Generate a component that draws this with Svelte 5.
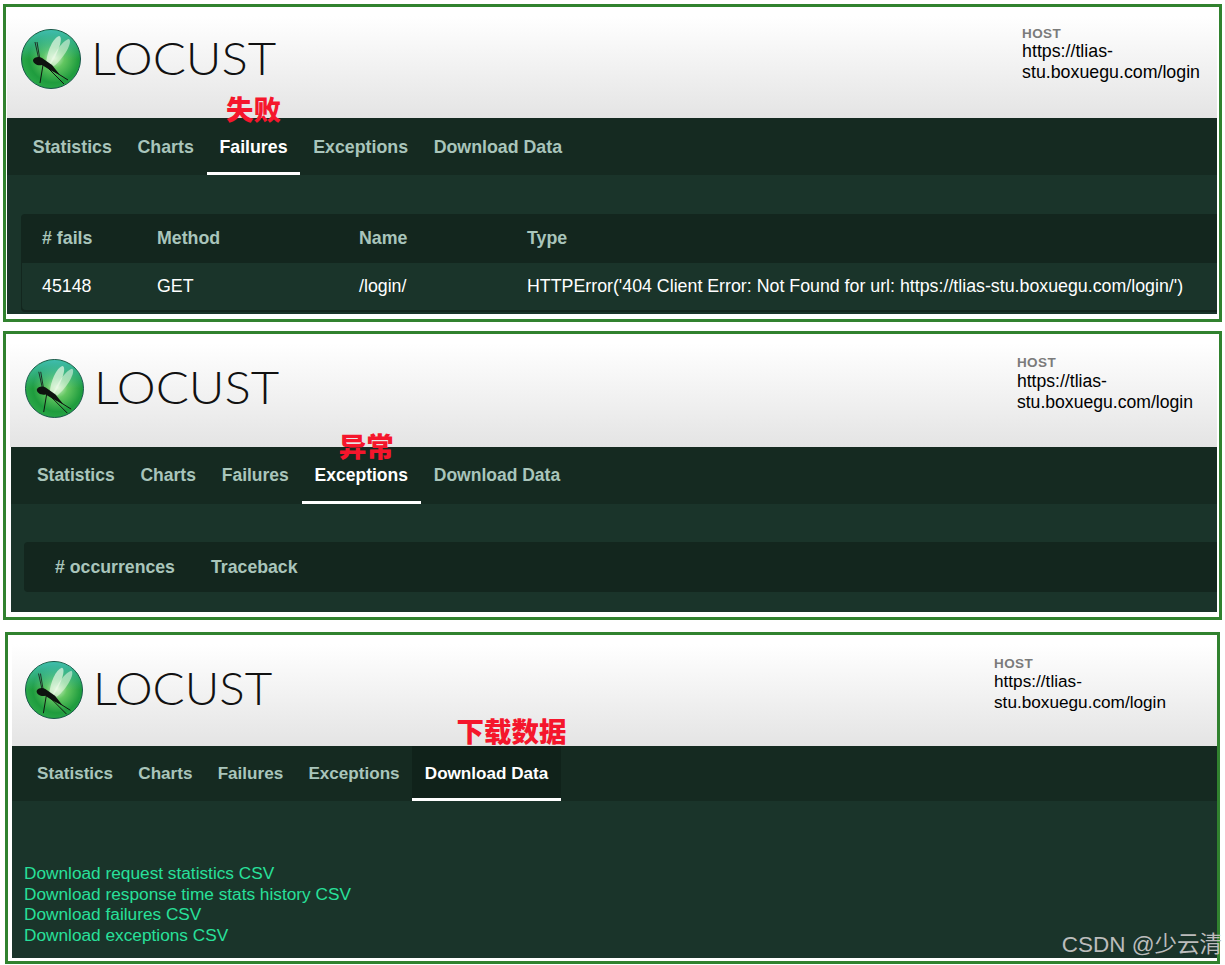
<script>
  const tabs = ['Statistics', 'Charts', 'Failures', 'Exceptions', 'Download Data'];
  const links = ['Download request statistics CSV', 'Download response time stats history CSV', 'Download failures CSV', 'Download exceptions CSV'];
  const panels = [
    { id: 'p1', active: 2, note: '失败' },
    { id: 'p2', active: 3, note: '异常' },
    { id: 'p3', active: 4, note: '下载数据' }
  ];
</script>

{#snippet logo(id)}
  <svg class="mark" viewBox="0 0 60 60" aria-hidden="true">
    <defs>
      <radialGradient id="ball{id}" cx="0.55" cy="0.48" r="0.6">
        <stop offset="0" stop-color="#d8f6d2" />
        <stop offset="0.3" stop-color="#62c660" />
        <stop offset="0.7" stop-color="#1f9c3e" />
        <stop offset="0.92" stop-color="#2aa848" />
        <stop offset="1" stop-color="#0f7040" />
      </radialGradient>
      <linearGradient id="rim{id}" x1="0" y1="0" x2="0" y2="1">
        <stop offset="0" stop-color="#3fbcae" />
        <stop offset="0.5" stop-color="#3fbcae" stop-opacity="0" />
      </linearGradient>
    </defs>
    <circle cx="30" cy="30" r="29.5" fill="url(#ball{id})" stroke="#17564a" stroke-width="1" />
    <circle cx="30" cy="30" r="29" fill="url(#rim{id})" />
    <path d="M25 35C26 22 32 9 38 7C43 8 37 24 30 35Z" fill="#e8f8e4" opacity=".7" />
    <path d="M28 36C33 24 42 11 48 10C52 13 43 29 33 37Z" fill="#eefaea" opacity=".55" />
    <path d="M18 31L14 13M19 31L16 13" stroke="#1c2f26" stroke-width="1" fill="none" />
    <path d="M12 31C13 28 18 27 21 29L31 36L39 46L29 41L21 36C17 37 12 35 12 31Z" fill="#0e130f" />
    <path d="M22 36L19 54M26 38L43 55M31 41L47 51" stroke="#0e130f" stroke-width="1" fill="none" />
  </svg>
{/snippet}

<main class="page">
  {#each panels as p}
    <section class="panel {p.id}">
      <header class="head">
        <div class="brand">
          {@render logo(p.id)}
          <span class="word">LOCUST</span>
        </div>
        <div class="host">
          <div class="host-label">HOST</div>
          <div class="host-url">https://tlias-<br />stu.boxuegu.com/login</div>
        </div>
      </header>
      <nav class="nav">
        {#each tabs as t, i}
          <span class="tab" class:active={i === p.active}>
            {t}
            {#if i === p.active}<b class="note">{p.note}</b>{/if}
          </span>
        {/each}
      </nav>
      <div class="body">
        {#if p.id === 'p1'}
          <div class="table">
            <div class="row th"><span class="c1">#&nbsp;fails</span><span class="c2">Method</span><span class="c3">Name</span><span class="c4">Type</span></div>
            <div class="row td"><span class="c1">45148</span><span class="c2">GET</span><span class="c3">/login/</span><span class="c4">HTTPError('404 Client Error: Not Found for url: https://tlias-stu.boxuegu.com/login/')</span></div>
          </div>
        {:else if p.id === 'p2'}
          <div class="table">
            <div class="row th"><span class="e1"># occurrences</span><span>Traceback</span></div>
          </div>
        {:else}
          <div class="links">
            {#each links as l}<span class="link">{l}</span>{/each}
          </div>
        {/if}
      </div>
    </section>
  {/each}
  <span class="wm">CSDN @少云清</span>
</main>

<style>
  :global(body) { margin: 0; background: #fff; }
  .page {
    width: 1225px; height: 965px; overflow: hidden; position: relative; box-sizing: border-box;
    padding: 4px 3px 0;
    font-family: "Liberation Sans", Arial, sans-serif;
  }
  .panel { border: 3px solid #31822f; box-sizing: border-box; background: #fff; display: flex; flex-direction: column; }
  .head {
    display: flex; justify-content: space-between; box-sizing: border-box; flex: none;
    background: linear-gradient(#fff 8%, #e4e4e4);
  }
  .brand { display: flex; align-items: center; }
  .word { font-family: Lato, sans-serif; font-weight: 300; color: #111; line-height: 1; transform: scaleX(1.068); transform-origin: left center; margin-top: -2px; }
  .host-label { font-weight: 700; font-size: 13.5px; color: #7b7b7b; letter-spacing: .4px; line-height: 14px; }
  .host-url { color: #000; line-height: 21px; }
  .nav { display: flex; background: #152a21; flex: none; }
  .tab { position: relative; font-weight: 700; color: #a9c5bb; box-sizing: border-box; display: flex; align-items: center; white-space: nowrap; }
  .tab.active { color: #fff; box-shadow: inset 0 -3px #fff; }
  .note {
    position: absolute; left: 0; right: 0; text-align: center; line-height: 28px;
    color: #f5162c; font-family: "Noto Sans CJK SC", sans-serif; font-weight: 900; font-size: 27.5px; white-space: nowrap;
  }
  .body { background: #1a342a; flex: 1; min-height: 0; box-sizing: border-box; }
  .table { background: #13261e; border-radius: 4px 0 0 4px; overflow: hidden; }
  .row { display: flex; align-items: center; font-size: 17.8px; }
  .th { color: #a9c5bb; font-weight: 700; }
  .td { color: #fff; background: #1a342a; margin: 0 0 2px 1.5px; border-radius: 0 0 0 4px; box-sizing: border-box; padding-bottom: 1px; }
  .c1, .c2, .c3 { flex: none; box-sizing: border-box; }
  .c4 { white-space: nowrap; }
  .links { display: flex; flex-direction: column; }
  .link { color: #28e09a; font-size: 17.26px; line-height: 20.6px; }

  .p1 { height: 318px; margin-bottom: 9px; }
  .p1 .head { height: 111px; margin: 0 2px 0 1px; padding: 0 17px 0 14px; }
  .p1 .brand { gap: 10px; margin-top: -8px; }
  .p1 .mark { width: 60px; height: 60px; }
  .p1 .word { font-size: 46px; }
  .p1 .host { margin-top: 20px; }
  .p1 .host-url { font-size: 17.8px; }
  .p1 .nav { height: 57px; margin: 0 2px 0 1px; padding-left: 13px; }
  .p1 .tab { padding: 1px 12.8px 0; font-size: 17.8px; }
  .p1 .note { top: -24px; }
  .p1 .body { margin: 0 2px 5px 1px; padding: 39px 0 0 13.5px; }
  .p1 .th { height: 49px; }
  .p1 .td { height: 47px; }
  .p1 .c1 { width: 136.5px; padding-left: 21.5px; }
  .p1 .td .c1 { width: 135px; padding-left: 20px; }
  .p1 .c2 { width: 202px; }
  .p1 .c3 { width: 168px; }

  .p2 { height: 289px; margin-bottom: 12px; }
  .p2 .head { height: 113px; margin: 0 2px 0 4px; padding: 0 24px 0 15px; }
  .p2 .brand { gap: 10px; margin-top: -5px; }
  .p2 .mark { width: 59px; height: 59px; }
  .p2 .word { font-size: 46px; }
  .p2 .host { margin-top: 22px; }
  .p2 .host-label { margin-bottom: 1px; }
  .p2 .host-url { font-size: 17.6px; }
  .p2 .nav { height: 57px; margin: 0 2px 0 5px; padding-left: 13px; }
  .p2 .tab { padding: 0 12.9px; font-size: 17.5px; }
  .p2 .note { top: -16px; left: 5px; right: -5px; }
  .p2 .body { margin: 0 2px 5px 5px; padding: 38px 0 0 13px; }
  .p2 .th { height: 50px; font-size: 17.7px; }
  .p2 .e1 { padding-left: 31px; width: 156px; }

  .p3 { height: 332px; margin: 0 2px; }
  .p3 .head { height: 111px; margin-left: 4px; padding: 0 51px 0 13px; }
  .p3 .brand { gap: 10px; margin-top: -2px; }
  .p3 .mark { width: 58px; height: 58px; }
  .p3 .word { font-size: 44.5px; }
  .p3 .host { margin-top: 22px; }
  .p3 .host-url { font-size: 17.2px; }
  .p3 .nav { height: 55px; margin-left: 4px; padding-left: 12.5px; }
  .p3 .tab { padding: 0 12.6px; font-size: 17.1px; }
  .p3 .tab.active { background: #10221a; }
  .p3 .note { top: -30px; left: 25px; right: -25px; }
  .p3 .body { margin: 0 0 3px 4px; padding: 62px 0 0 12px; }

  .wm {
    position: absolute; right: 3px; top: 931px; line-height: 28px; white-space: nowrap;
    font-family: "Liberation Sans", "Noto Sans CJK SC", sans-serif; font-size: 22.5px; color: #bcbcbc;
  }
</style>
